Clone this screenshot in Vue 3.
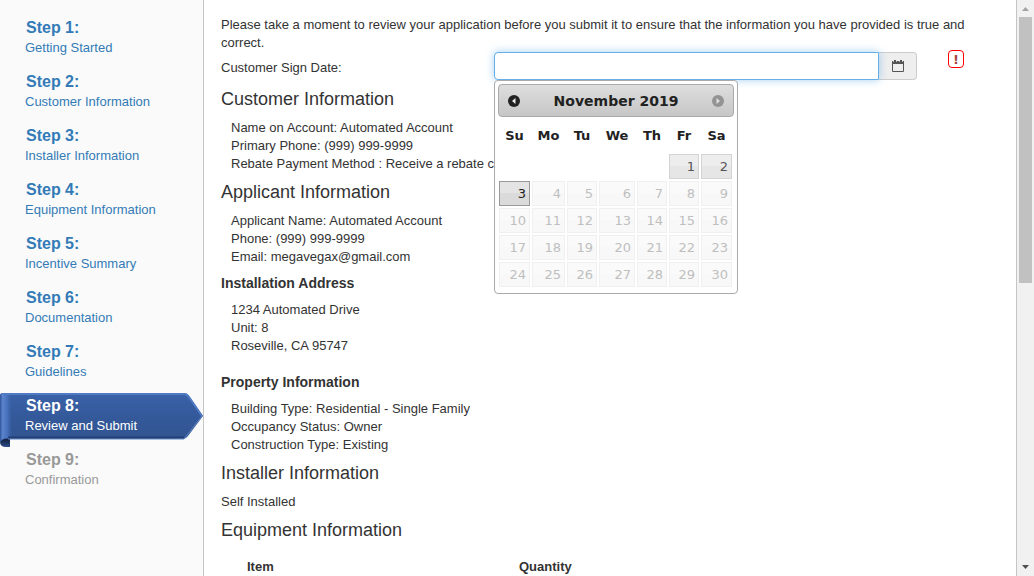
<script setup>
import { ref } from 'vue'

const signDate = ref('')

const steps = [
  'Getting Started',
  'Customer Information',
  'Installer Information',
  'Equipment Information',
  'Incentive Summary',
  'Documentation',
  'Guidelines',
  'Review and Submit',
  'Confirmation',
].map((name, i) => ({ n: i + 1, name, active: i === 7, disabled: i === 8 }))

const weekdays = ['Su', 'Mo', 'Tu', 'We', 'Th', 'Fr', 'Sa']
const weeks = [
  [0, 0, 0, 0, 0, 1, 2],
  [3, 4, 5, 6, 7, 8, 9],
  [10, 11, 12, 13, 14, 15, 16],
  [17, 18, 19, 20, 21, 22, 23],
  [24, 25, 26, 27, 28, 29, 30],
]
</script>

<template>
  <div class="page">
    <nav class="sidebar">
      <component
        :is="step.disabled ? 'span' : 'a'"
        v-for="step in steps"
        :key="step.n"
        class="step"
        :class="{ active: step.active, disabled: step.disabled }"
        :href="step.disabled ? null : '#'"
      >
        <svg v-if="step.active" class="ribbon" viewBox="0 0 204 54" preserveAspectRatio="none" aria-hidden="true">
          <defs>
            <linearGradient id="body" x1="0" y1="0" x2="0" y2="1">
              <stop offset="0" stop-color="#3a62a8" />
              <stop offset="0.5" stop-color="#34599a" />
              <stop offset="1" stop-color="#31538f" />
            </linearGradient>
            <linearGradient id="roll" x1="0" y1="0" x2="1" y2="0">
              <stop offset="0" stop-color="#2f559b" />
              <stop offset="0.2" stop-color="#5b84cd" />
              <stop offset="0.6" stop-color="#456fb9" />
              <stop offset="1" stop-color="#34599a" stop-opacity="0" />
            </linearGradient>
            <linearGradient id="fold" x1="0" y1="0" x2="0" y2="1">
              <stop offset="0" stop-color="#0d1a33" />
              <stop offset="1" stop-color="#2c4c88" />
            </linearGradient>
          </defs>
          <path d="M0 45H10V54H6Q0 54 0 49Z" fill="url(#fold)" />
          <path d="M3 0H184Q187 0 189 3L203 23L188 43Q186 46 183 46H6Q1 46 0 50V3Q0 0 3 0Z" fill="url(#body)" />
          <path d="M3 0H13V45H6Q1 46 0 50V3Q0 0 3 0Z" fill="url(#roll)" />
          <path d="M3 1H184Q187 1 189 4L202 23" fill="none" stroke="#507bc4" stroke-width="2" />
          <path d="M8 44.5H184" stroke="#213f73" stroke-width="2" />
          <path d="M8 46H184L202 23" fill="none" stroke="#6186c4" stroke-width="1" />
        </svg>
        <strong>Step {{ step.n }}:</strong>
        <span class="name">{{ step.name }}</span>
      </component>
    </nav>

    <main class="content">
      <p>
        Please take a moment to review your application before you submit it to ensure that the
        information you have provided is true and correct.
      </p>
      <div class="date-row">
        <label for="sign-date">Customer Sign Date:</label>
        <div class="date-group">
          <input id="sign-date" v-model="signDate" type="text" autocomplete="off" />
          <button type="button" class="open" aria-label="Open calendar">
            <svg width="14" height="14" viewBox="0 0 14 14" aria-hidden="true">
              <path d="M1.5 3.5H12.5V12.5H1.5Z" fill="none" stroke="#555" />
              <path d="M1 2H13V5H1Z" fill="#555" />
              <path d="M4 1V3M10 1V3" stroke="#555" stroke-width="2" />
              <path d="M2.5 2V3M5.5 2V3M8.5 2V3M11.5 2V3" stroke="#bbb" />
            </svg>
          </button>

          <div class="calendar">
            <header class="cal-head">
              <button type="button" class="arrow" aria-label="Prev">
                <svg width="12" height="12" viewBox="0 0 12 12" aria-hidden="true">
                  <circle cx="6" cy="6" r="6" fill="#222" />
                  <path d="M7.5 3V9L4 6Z" fill="#eee" />
                </svg>
              </button>
              <span>November 2019</span>
              <button type="button" class="arrow" aria-label="Next" disabled>
                <svg width="12" height="12" viewBox="0 0 12 12" aria-hidden="true">
                  <circle cx="6" cy="6" r="6" fill="#939393" />
                  <path d="M4.5 3V9L8 6Z" fill="#ddd" />
                </svg>
              </button>
            </header>
            <table class="days">
              <colgroup>
                <col v-for="d in weekdays" :key="d" :class="d.toLowerCase()" />
              </colgroup>
              <thead>
                <tr><th v-for="d in weekdays" :key="d" scope="col">{{ d }}</th></tr>
              </thead>
              <tbody>
                <tr v-for="(week, w) in weeks" :key="w">
                  <td v-for="(day, i) in week" :key="i">
                    <button v-if="day" type="button" class="day" :class="{ today: day === 3 }" :disabled="day > 3">{{ day }}</button>
                  </td>
                </tr>
              </tbody>
            </table>
          </div>
        </div>
        <span class="alert" role="img" aria-label="Required">!</span>
      </div>

      <h3>Customer Information</h3>
      <ul>
        <li>Name on Account: Automated Account</li>
        <li>Primary Phone: (999) 999-9999</li>
        <li>Rebate Payment Method : Receive a rebate check</li>
      </ul>
      <h3>Applicant Information</h3>
      <ul>
        <li>Applicant Name: Automated Account</li>
        <li>Phone: (999) 999-9999</li>
        <li>Email: megavegax@gmail.com</li>
      </ul>
      <h4>Installation Address</h4>
      <ul>
        <li>1234 Automated Drive</li>
        <li>Unit: 8</li>
        <li>Roseville, CA 95747</li>
      </ul>
      <h4 class="spaced">Property Information</h4>
      <ul>
        <li>Building Type: Residential - Single Family</li>
        <li>Occupancy Status: Owner</li>
        <li>Construction Type: Existing</li>
      </ul>
      <h3>Installer Information</h3>
      <p>Self Installed</p>
      <h3>Equipment Information</h3>
      <table class="equipment">
        <thead>
          <tr><th scope="col">Item</th><th scope="col">Quantity</th></tr>
        </thead>
      </table>
    </main>

    <div class="scrollbar" aria-hidden="true">
      <svg width="17" height="17" viewBox="0 0 17 17"><path d="M5 11H12L8.5 7Z" fill="#a3a3a3" /></svg>
      <div class="track"><div class="thumb"></div></div>
      <svg width="17" height="17" viewBox="0 0 17 17"><path d="M5 6H12L8.5 10Z" fill="#505050" /></svg>
    </div>
  </div>
</template>

<style>
body {
  overflow: hidden;
}
</style>

<style scoped>
* {
  box-sizing: border-box;
}
.page {
  display: flex;
  height: 100vh;
  overflow: hidden;
  background: #fff;
  color: #333;
  font: 13px/18px "Liberation Sans", Arial, sans-serif;
}
.sidebar {
  flex: 0 0 204px;
  padding-top: 10px;
  background: #fafafa;
  border-right: 1px solid #c5c5c5;
}
.step {
  position: relative;
  display: flex;
  flex-direction: column;
  gap: 1px;
  padding: 8px 0 7px 25px;
  color: #337ab7;
  text-decoration: none;
}
.step strong {
  position: relative;
  padding-left: 1px;
  font-size: 16px;
  line-height: 20px;
}
.name {
  position: relative;
}
.step.active {
  color: #fff;
}
.step.disabled {
  color: #999;
}
.ribbon {
  position: absolute;
  top: 5px;
  left: 0;
  width: 204px;
  height: 54px;
}
.content {
  flex: 1;
  min-width: 0;
  padding: 16px 30px 0 17px;
  overflow: hidden;
  border-right: 1px solid #c5c5c5;
}
p,
ul {
  margin: 0;
  padding: 0;
}
ul {
  padding-left: 10px;
  list-style: none;
}
h3 {
  margin: 9px 0 10px;
  font-size: 18px;
  font-weight: normal;
  line-height: 20px;
}
h4 {
  margin: 8px 0 9px;
  font-size: 14px;
}
h4.spaced {
  margin-top: 18px;
}
.date-row {
  display: grid;
  grid-template-columns: 273px 1fr 69px;
}
.date-row label {
  padding-top: 7px;
}
.date-group {
  position: relative;
  display: flex;
  height: 28px;
}
.date-group input {
  z-index: 1;
  flex: 1;
  min-width: 0;
  padding: 4px 8px;
  font: inherit;
  background: #fff;
  border: 1px solid #66afe9;
  border-radius: 4px 0 0 4px;
  outline: none;
  box-shadow: 0 0 8px rgba(102, 175, 233, 0.6);
}
.open {
  display: flex;
  align-items: center;
  justify-content: center;
  width: 38px;
  padding: 0;
  background: #eee;
  border: 1px solid #ccc;
  border-left: 0;
  border-radius: 0 4px 4px 0;
}
.alert {
  justify-self: start;
  align-self: start;
  width: 16px;
  height: 18px;
  margin-left: 31px;
  margin-top: -2px;
  color: #a94442;
  font-family: "DejaVu Sans", Verdana, sans-serif;
  font-weight: bold;
  line-height: 17px;
  text-align: center;
  border: 1px solid #f00;
  border-radius: 4px;
}
.calendar {
  position: absolute;
  z-index: 2;
  top: 28px;
  left: 0;
  padding: 3px 3px 5px;
  color: #222;
  font-family: "DejaVu Sans", Verdana, sans-serif;
  background: #fff;
  border: 1px solid #aaa;
  border-radius: 4px;
}
.cal-head {
  display: flex;
  align-items: center;
  justify-content: space-between;
  width: 236px;
  height: 33px;
  padding: 0 9px;
  font-size: 14px;
  font-weight: bold;
  background: linear-gradient(#dedede, #c6c6c6);
  border: 1px solid #aaa;
  border-radius: 4px;
}
.arrow {
  display: flex;
  padding: 0;
  background: none;
  border: 0;
}
.days {
  width: 235px;
  table-layout: fixed;
  border-collapse: collapse;
}
.su, .sa { width: 33px; }
.mo { width: 35px; }
.tu, .th, .fr { width: 32px; }
.we { width: 38px; }
.days th {
  height: 36px;
  padding: 2px 0 0;
  font-size: 13px;
}
.days td {
  height: 27px;
  padding: 1px;
}
.day {
  display: block;
  width: 100%;
  height: 25px;
  padding: 0 3px;
  color: #555;
  font: 13px/23px "DejaVu Sans", Verdana, sans-serif;
  text-align: right;
  background: linear-gradient(#ededed 50%, #e6e6e6 50%);
  border: 1px solid #d3d3d3;
}
.day.today {
  color: #212121;
  background: linear-gradient(#e4e4e4 50%, #dadada 50%);
  border-color: #999;
}
.day:disabled {
  color: #bfbfbf;
  background: linear-gradient(#fafafa 50%, #f8f8f8 50%);
  border-color: #f0f0f0;
}
.equipment {
  width: 100%;
  margin-top: 18px;
  table-layout: fixed;
  border-collapse: collapse;
}
.equipment th {
  padding: 0 0 0 26px;
  text-align: left;
}
.equipment th:first-child {
  width: 272px;
}
.scrollbar {
  display: flex;
  flex: 0 0 17px;
  flex-direction: column;
  background: #f1f1f1;
}
.track {
  flex: 1;
  padding: 0 2px;
}
.thumb {
  height: 49%;
  background: #c1c1c1;
}
</style>
